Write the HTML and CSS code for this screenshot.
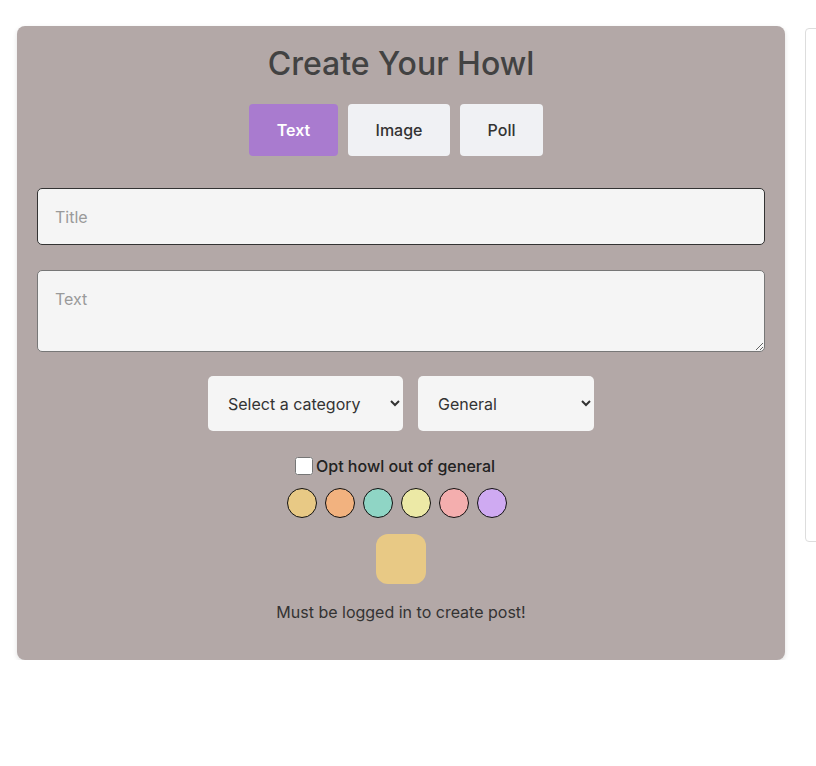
FILE: index.html
```html
<!DOCTYPE html>
<html>
<head>
<meta charset="utf-8">
<link rel="stylesheet" href="styles.css">
</head>
<body>
<div class="layout">
  <div class="card">
    <h1 class="heading">Create Your Howl</h1>
    <div class="tabs">
      <button class="tab tab-active">Text</button>
      <button class="tab tab-image">Image</button>
      <button class="tab tab-poll">Poll</button>
    </div>
    <input class="field title-field" type="text" placeholder="Title">
    <textarea class="field text-field" placeholder="Text"></textarea>
    <div class="selects">
      <select class="select select-cat"><option>Select a category</option></select>
      <select class="select select-gen"><option>General</option></select>
    </div>
    <label class="opt"><input class="check" type="checkbox"><span>Opt howl out of general</span></label>
    <div class="swatches">
      <span class="swatch c1"></span>
      <span class="swatch c2"></span>
      <span class="swatch c3"></span>
      <span class="swatch c4"></span>
      <span class="swatch c5"></span>
      <span class="swatch c6"></span>
    </div>
    <div class="preview"></div>
    <p class="note">Must be logged in to create post!</p>
  </div>
  <div class="side"></div>
</div>
</body>
</html>
```
FILE: styles.css
```css
* { box-sizing: border-box; }
html, body { margin: 0; padding: 0; background: #fff; }
body { font-family: Inter, "Noto Sans", sans-serif; color: #333; overflow: hidden; }
.layout {
  display: flex;
  align-items: flex-start;
  gap: 20px;
  padding: 26px 0 0 17px;
  width: 1200px;
}
.card {
  width: 768px;
  flex: none;
  background: #b3a8a7;
  border-radius: 8px;
  box-shadow: 0 2px 5px rgba(0,0,0,0.12);
  padding: 18px 20px 36px;
  display: flex;
  flex-direction: column;
  align-items: center;
}
.heading {
  margin: 0;
  font-size: 32px;
  line-height: 40px;
  font-weight: 500;
  color: #424242;
}
.tabs {
  margin-top: 20px;
  display: flex;
  gap: 10px;
  padding-right: 10px;
}
.tab {
  height: 52px;
  border: none;
  border-radius: 4px;
  background: #f0f1f4;
  color: #333;
  font-family: Inter, sans-serif;
  font-size: 16px;
  font-weight: 500;
  padding: 0;
}
.tab-active { width: 89px; background: #a97bcf; color: #fff; font-weight: 600; }
.tab-image { width: 102px; }
.tab-poll { width: 83px; }
.field {
  width: 100%;
  background: #f5f5f5;
  border-radius: 5px;
  font-family: Inter, sans-serif;
  font-size: 16px;
  color: #333;
  padding: 0 17px;
  outline: none;
}
.field::placeholder { color: #9a9a9a; }
.title-field {
  margin-top: 32px;
  height: 57px;
  border: 1px solid #333;
}
.text-field {
  margin-top: 25px;
  height: 82px;
  border: 1px solid #777;
  padding-top: 18px;
  resize: vertical;
  display: block;
}
.selects {
  margin-top: 24px;
  display: flex;
  gap: 15px;
}
.select {
  height: 55px;
  border: none;
  border-radius: 5px;
  background-color: #f5f5f5;
  font-family: Inter, sans-serif;
  font-size: 16px;
  color: #333;
  padding: 0 8px 0 16px;
}
.select-cat { width: 195px; }
.select-gen { width: 176px; }
.opt {
  margin-top: 25px;
  display: flex;
  align-items: center;
  font-size: 16px;
  font-weight: 500;
  color: #222;
  height: 20px;
  padding-right: 12px;
}
.check {
  width: 18px;
  height: 18px;
  margin: 0 3px 0 0;
}
.swatches {
  margin-top: 12px;
  display: flex;
  gap: 8px;
  padding-right: 8px;
}
.swatch {
  width: 30px;
  height: 30px;
  border-radius: 50%;
  border: 1px solid #111;
}
.c1 { background: #e8c985; }
.c2 { background: #f2b27f; }
.c3 { background: #8fd5c5; }
.c4 { background: #ece9a6; }
.c5 { background: #f4aeae; }
.c6 { background: #cfaaf2; }
.preview {
  margin-top: 16px;
  width: 50px;
  height: 50px;
  border-radius: 12px;
  background: #e8c985;
}
.note {
  margin: 16px 0 0;
  font-size: 16px;
  line-height: 24px;
  color: #333;
}
.side {
  margin-top: 2px;
  width: 300px;
  height: 514px;
  border: 1px solid #ddd;
  border-radius: 4px;
  flex: none;
}
```
